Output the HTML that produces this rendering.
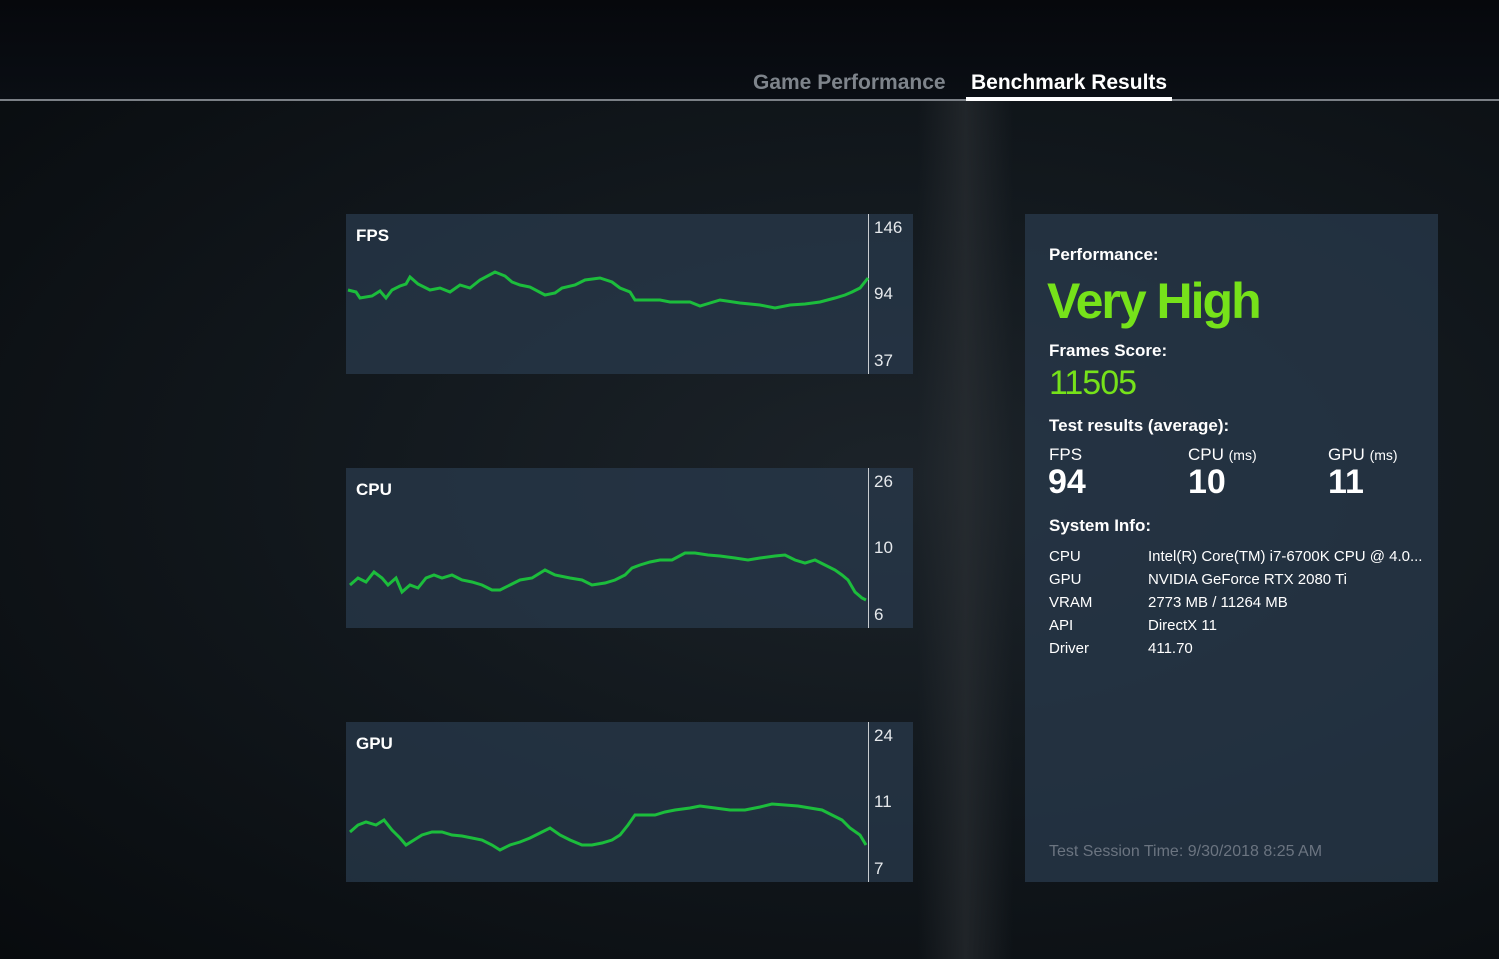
<!DOCTYPE html>
<html><head><style>
body{margin:0;width:1499px;height:959px;overflow:hidden;position:relative;font-family:"Liberation Sans",sans-serif;
background:radial-gradient(ellipse at 60% 50%,#1c2329 0%,#12181d 45%,#080b0e 100%);}
.top{position:absolute;left:0;top:0;width:1499px;height:100px;background:linear-gradient(#06080c,#0a0e14);}
.line{position:absolute;left:0;top:99px;width:1499px;height:2px;background:#7b8086;}
.tab{position:absolute;top:71px;font-size:21px;font-weight:bold;}
.panel{position:absolute;background:rgba(40,56,74,0.78);}
.lbl{position:absolute;color:#fff;font-size:17px;font-weight:bold;}
.ax{position:absolute;color:#e6e9ec;font-size:17px;}
.w{color:#fff;position:absolute;}
</style></head><body>
<div style="position:absolute;left:918px;top:101px;width:95px;height:858px;background:linear-gradient(90deg,rgba(40,44,48,0),rgba(44,48,52,0.6),rgba(40,44,48,0))"></div>
<div class="top"></div>
<div class="line"></div>
<div class="tab" style="left:753px;color:#7e848b">Game Performance</div>
<div class="tab" style="left:971px;color:#fff">Benchmark Results</div>
<div style="position:absolute;left:966px;top:97px;width:206px;height:4px;background:#fff"></div>

<div class="panel" style="left:346px;top:214px;width:567px;height:160px"></div>
<div class="panel" style="left:346px;top:468px;width:567px;height:160px"></div>
<div class="panel" style="left:346px;top:722px;width:567px;height:160px"></div>
<div style="position:absolute;left:868px;top:214px;width:1px;height:160px;background:#c8ccd0"></div>
<div style="position:absolute;left:868px;top:468px;width:1px;height:160px;background:#c8ccd0"></div>
<div style="position:absolute;left:868px;top:722px;width:1px;height:160px;background:#c8ccd0"></div>
<div class="lbl" style="left:356px;top:226px">FPS</div>
<div class="lbl" style="left:356px;top:480px">CPU</div>
<div class="lbl" style="left:356px;top:734px">GPU</div>
<div class="ax" style="left:874px;top:218px">146</div>
<div class="ax" style="left:874px;top:284px">94</div>
<div class="ax" style="left:874px;top:351px">37</div>
<div class="ax" style="left:874px;top:472px">26</div>
<div class="ax" style="left:874px;top:538px">10</div>
<div class="ax" style="left:874px;top:605px">6</div>
<div class="ax" style="left:874px;top:726px">24</div>
<div class="ax" style="left:874px;top:792px">11</div>
<div class="ax" style="left:874px;top:859px">7</div>

<svg style="position:absolute;left:0;top:0" width="1499" height="959">
<g fill="none" stroke="#1cbd3c" stroke-width="3" stroke-linejoin="miter">
<polyline points="348,290 356,292 360,298 372,296 380,291 386,298 392,290 400,286 406,284 410,277 418,284 430,290 440,288 450,292 460,285 470,288 480,280 495,272 505,276 512,282 520,285 530,287 545,295 555,293 562,288 575,285 585,280 600,278 612,282 620,288 630,292 635,300 648,300 660,300 670,302 690,302 700,306 720,300 740,303 760,305 775,308 790,305 805,304 820,302 835,298 845,295 852,292 860,288 868,278"/>
<polyline points="350,585 358,578 366,582 374,572 382,578 388,585 396,578 402,592 410,585 418,588 426,578 434,575 442,578 452,575 462,580 472,582 482,585 492,590 500,590 510,585 520,580 532,578 545,570 555,575 570,578 582,580 592,585 605,583 615,580 625,575 632,568 640,565 650,562 660,560 672,560 685,553 695,553 708,555 720,556 735,558 748,560 760,558 775,556 785,555 795,560 805,563 815,560 825,565 835,570 842,575 848,580 855,592 862,598 866,600"/>
<polyline points="350,832 358,825 366,822 376,825 384,820 392,830 400,838 406,845 414,840 422,835 432,832 442,832 452,835 462,836 472,838 482,840 492,845 500,850 510,845 520,842 530,838 540,833 550,828 560,835 570,840 582,845 592,845 602,843 612,840 620,835 628,825 635,815 645,815 655,815 665,812 675,810 690,808 700,806 715,808 730,810 745,810 760,807 772,804 785,805 798,806 810,808 822,810 832,815 842,820 850,828 860,835 866,845"/>
</g>
</svg>

<div class="panel" style="left:1025px;top:214px;width:413px;height:668px"></div>
<div class="w" style="left:1049px;top:245px;font-size:17px;font-weight:bold">Performance:</div>
<div class="w" style="left:1047px;top:272px;font-size:50px;font-weight:bold;color:#76e21a;letter-spacing:-2px">Very High</div>
<div class="w" style="left:1049px;top:341px;font-size:17px;font-weight:bold">Frames Score:</div>
<div class="w" style="left:1049px;top:364px;font-size:34px;color:#76e21a;letter-spacing:-1px">11505</div>
<div class="w" style="left:1049px;top:416px;font-size:17px;font-weight:bold">Test results (average):</div>
<div class="w" style="left:1049px;top:445px;font-size:17px">FPS</div>
<div class="w" style="left:1188px;top:445px;font-size:17px">CPU <span style="font-size:14px">(ms)</span></div>
<div class="w" style="left:1328px;top:445px;font-size:17px">GPU <span style="font-size:14px">(ms)</span></div>
<div class="w" style="left:1048px;top:463px;font-size:34px;font-weight:bold">94</div>
<div class="w" style="left:1188px;top:463px;font-size:34px;font-weight:bold">10</div>
<div class="w" style="left:1328px;top:463px;font-size:34px;font-weight:bold">11</div>
<div class="w" style="left:1049px;top:516px;font-size:17px;font-weight:bold">System Info:</div>
<div class="w" style="left:1049px;top:545px;font-size:15px;line-height:23px">CPU<br>GPU<br>VRAM<br>API<br>Driver</div>
<div class="w" style="left:1148px;top:545px;font-size:15px;line-height:23px">Intel(R) Core(TM) i7-6700K CPU @ 4.0...<br>NVIDIA GeForce RTX 2080 Ti<br>2773 MB / 11264 MB<br>DirectX 11<br>411.70</div>
<div class="w" style="left:1049px;top:843px;font-size:16px;color:#6b7480">Test Session Time: 9/30/2018 8:25 AM</div>
</body></html>
